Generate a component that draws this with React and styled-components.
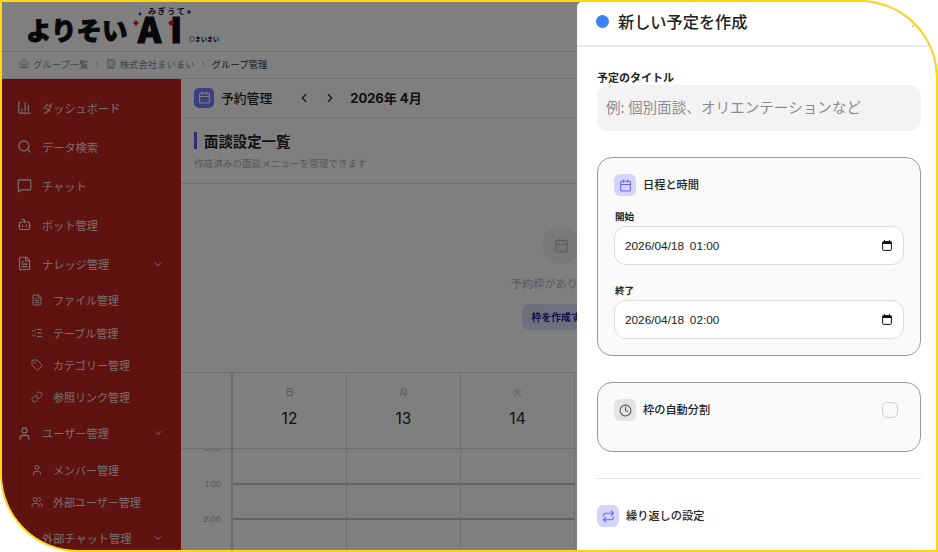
import styled, { createGlobalStyle } from 'styled-components';
import {
    Bot, Building, Calendar, CalendarDays, ChartColumn, ChevronDown, ChevronLeft, ChevronRight, Clock,
    FileText, House, Link, ListChecks, MessageSquare, Repeat, Search, Tag, User, Users,
} from 'lucide-react';

const GlobalStyle = createGlobalStyle`
html, body { margin: 0; padding: 0; background: #fff; }
body { font-family: "Noto Sans CJK JP", "Noto Sans", sans-serif; }
* { box-sizing: border-box; }
`;

const Frame = styled.div`
position: relative;
width: 938px;
height: 552px;
border: 2px solid #ffd60a;
border-radius: 0 78px 0 78px;
overflow: hidden;
background: #fff;
`;

const Page = styled.div`
display: flex;
flex-direction: column;
height: 100%;
isolation: isolate;
`;

const Header = styled.header`
height: 50px;
flex: none;
padding-left: 24px;
border-bottom: 1px solid #dcdcdc;
`;

const Breadcrumb = styled.nav`
height: 27px;
flex: none;
display: flex;
align-items: center;
gap: 4px;
padding: 0 0 2px 17px;
font-size: 9.4px;
color: #8a8a8a;
border-bottom: 1px solid #e4e4e4;
svg { flex: none; }
`;

const Crumb = styled.span`
color: ${(p) => (p.$current ? '#333' : '#8a8a8a')};
`;

const Body = styled.div`
flex: 1;
display: flex;
min-height: 0;
`;

const Sidebar = styled.aside`
width: 179px;
flex: none;
padding-top: 9px;
background: #bc2620;
border-right: 1px solid #d81c1c;
overflow: hidden;
`;

const NavRow = styled.div`
height: 39px;
display: flex;
align-items: center;
gap: 10px;
padding: 0 16px 0 ${(p) => (p.$noIcon ? 40 : 15)}px;
font-size: 11.2px;
color: #f0dcdc;
svg { color: #e8eef0; flex: none; }
`;

const Chevron = styled(ChevronDown)`
margin-left: auto;
`;

const SubGroup = styled.div`
margin-left: 17px;
padding: 1px 0 0 11px;
border-left: 1px solid #9e201a;
`;

const SubRow = styled.div`
height: 32.4px;
display: flex;
align-items: center;
gap: 10px;
font-size: 11px;
color: #f0dcdc;
svg { color: #e8eef0; flex: none; }
`;

const Main = styled.main`
flex: 1;
min-width: 0;
display: flex;
flex-direction: column;
overflow: hidden;
`;

const TopBar = styled.div`
height: 39px;
flex: none;
display: flex;
align-items: center;
padding: 0 0 1px 13px;
border-bottom: 1px solid #e0e0e0;
`;

const TopIcon = styled.div`
width: 20px;
height: 20px;
border-radius: 5px;
background: #767eff;
color: #fff;
display: flex;
align-items: center;
justify-content: center;
`;

const TopTitle = styled.h1`
margin: 0 25px 0 7px;
font-size: 12.8px;
font-weight: 500;
color: #222;
`;

const MonthNav = styled.div`
display: flex;
align-items: center;
gap: 12px;
color: #222;
`;

const MonthLabel = styled.div`
margin-left: 13px;
font-size: 13px;
font-weight: 700;
color: #222;
font-family: "Inter", "Noto Sans CJK JP", sans-serif;
`;

const Section = styled.div`
height: 66px;
flex: none;
padding: 14px 0 0 13px;
border-bottom: 1px solid #e0e0e0;
`;

const SectionTitle = styled.h2`
margin: 0;
padding-left: 7px;
font-size: 14.4px;
line-height: 17px;
font-weight: 700;
color: #222;
border-left: 3px solid #5a5fe0;
`;

const SectionSub = styled.p`
margin: 7px 0 0;
font-size: 9.6px;
line-height: 14px;
color: #b0b0b0;
`;

const Empty = styled.div`
height: 188px;
flex: none;
padding: 42px 0 0 5px;
display: flex;
flex-direction: column;
align-items: center;
`;

const EmptyCircle = styled.div`
width: 38px;
height: 38px;
border-radius: 50%;
background: #f3f3f3;
color: #bdbdbd;
display: flex;
align-items: center;
justify-content: center;
`;

const EmptyText = styled.p`
margin: 11px 0 0;
font-size: 11.2px;
line-height: 16px;
color: #b4b4b4;
`;

const EmptyButton = styled.div`
margin-top: 13px;
height: 26px;
padding: 0 10px;
display: flex;
align-items: center;
border-radius: 8px;
background: #dfe0fa;
color: #1c1c94;
font-size: 9.8px;
font-weight: 700;
`;

const DayHead = styled.div`
display: grid;
grid-template-columns: 52px repeat(3, 114px);
height: 77px;
flex: none;
position: relative;
z-index: 1;
background: #fff;
border-top: 1px solid #e0e0e0;
border-bottom: 1px solid #dcdcdc;
`;

const TimeHeadCell = styled.div`
border-right: 2px solid #d8d8d8;
`;

const DayCell = styled.div`
display: flex;
flex-direction: column;
align-items: center;
padding-top: 12px;
border-right: 1px solid #dedede;
`;

const DayName = styled.span`
font-size: 8.4px;
line-height: 12px;
color: #a0a0a0;
`;

const DayNum = styled.span`
margin-top: 11px;
font-size: 15.5px;
line-height: 22px;
color: #222;
font-family: "Inter", sans-serif;
`;

const TimeGrid = styled.div`
display: grid;
grid-template-columns: 52px repeat(3, 114px);
grid-auto-rows: 35.6px;
`;

const TimeCell = styled.div`
border-right: 2px solid #d8d8d8;
padding-right: 10px;
text-align: right;
font-family: "Inter", sans-serif;
font-size: 8.2px;
line-height: 10px;
color: #b4b4b4;
span { display: block; transform: translateY(-60%); }
`;

const SlotCell = styled.div`
border-right: 1px solid #dedede;
border-bottom: 2px solid #c4c4c4;
`;

const Overlay = styled.div`
position: absolute;
inset: 0;
background: rgba(0, 0, 0, 0.5);
`;

const Drawer = styled.section`
position: absolute;
top: 0;
right: 0;
bottom: 0;
width: 359px;
background: #fff;
border-radius: 5px 0 0 0;
overflow: hidden;
`;

const DrawerHead = styled.div`
height: 45px;
display: flex;
align-items: center;
gap: 9px;
padding: 0 19px 5px;
border-bottom: 2px solid #ebebeb;
svg { margin: 8px 0 0 auto; color: #9a9a9a; }
`;

const Dot = styled.span`
width: 13px;
height: 13px;
border-radius: 50%;
background: #3b82f6;
`;

const DrawerTitle = styled.h2`
margin: 0;
font-size: 16.2px;
font-weight: 500;
color: #222;
`;

const DrawerBody = styled.div`
padding: 23px 15px 0 20px;
`;

const FieldLabel = styled.label`
display: block;
font-size: ${(p) => p.$size || '11px'};
line-height: 14px;
font-weight: 700;
color: #222;
`;

const TitleInput = styled.div`
margin-top: 1px;
height: 46px;
padding: 0 0 3px 9px;
display: flex;
align-items: center;
border-radius: 12px;
background: #f3f3f4;
font-size: 14.6px;
color: #8c8c8c;
`;

const Card = styled.div`
margin-top: ${(p) => p.$top}px;
height: ${(p) => p.$height}px;
padding: 16px;
border: 1px solid #9a9a9a;
border-radius: 15px;
background: #fafafa;
`;

const CardHead = styled.div`
display: flex;
align-items: center;
gap: 7px;
font-size: 11.2px;
font-weight: 500;
color: #222;
`;

const HeadText = styled.span`
padding-bottom: 3px;
`;

const IconTile = styled.div`
width: 22px;
height: 22px;
flex: none;
border-radius: 6px;
display: flex;
align-items: center;
justify-content: center;
background: ${(p) => (p.$muted ? '#e4e4e4' : '#d4d4ff')};
color: ${(p) => (p.$muted ? '#555' : '#6366f1')};
`;

const TimeField = styled.div`
margin-top: ${(p) => p.$top}px;
padding-left: 1px;
`;

const DateBox = styled.div`
margin: 3px 0 0 -1px;
height: 39px;
padding: 0 11px 0 10px;
display: flex;
align-items: center;
justify-content: space-between;
border: 1px solid #dcdcdc;
border-radius: 12px;
background: #fff;
font-family: "Liberation Sans", sans-serif;
font-size: 11.8px;
word-spacing: 2.5px;
color: #222;
`;

const CheckBox = styled.div`
width: 16px;
height: 16px;
margin: 0 6px 0 auto;
border: 1.5px solid #cfcfcf;
border-radius: 5px;
`;

const Divider = styled.hr`
margin: 26px 0;
border: none;
border-top: 1px solid #e2e2e2;
`;

const NextCard = styled.div`
margin-top: 20px;
height: 40px;
border-radius: 15px;
background: #fafafa;
`;

const mainNav = [
    { Icon: ChartColumn, label: 'ダッシュボード' },
    { Icon: Search, label: 'データ検索' },
    { Icon: MessageSquare, label: 'チャット' },
    { Icon: Bot, label: 'ボット管理' },
];

const knowledge = [
    { Icon: FileText, label: 'ファイル管理' },
    { Icon: ListChecks, label: 'テーブル管理' },
    { Icon: Tag, label: 'カテゴリー管理' },
    { Icon: Link, label: '参照リンク管理' },
];

const users = [
    { Icon: User, label: 'メンバー管理' },
    { Icon: Users, label: '外部ユーザー管理' },
];

const days = [['日', 12], ['月', 13], ['火', 14]];

const LOGO_FONT = 'Noto Sans CJK JP';

const Logo = () => (
    <svg width="200" height="50" viewBox="0 0 200 50">
        <text x="0" y="38" fontSize="25.5" fontWeight="900" fill="#111" stroke="#111" strokeWidth="0.9" fontFamily={LOGO_FONT}>よりそい</text>
        <text x="112" y="41" fontSize="35" fontWeight="900" fill="#111" stroke="#111" strokeWidth="1.2" letterSpacing="9" fontFamily={LOGO_FONT}>AI</text>
        <text x="122" y="12" fontSize="8" fontWeight="700" fill="#111" letterSpacing="1.6" fontFamily={LOGO_FONT}>みぎうて</text>
        <text x="163" y="39" fontSize="6" fontWeight="700" fill="#111" fontFamily={LOGO_FONT}>◎まいまい</text>
        <path d="M107 21l3-3 3 3-3 3z M142 21l3-3 3 3-3 3z" fill="#e02020" />
        <circle cx="114" cy="12" r="1.5" fill="#2040c0" />
        <circle cx="163" cy="10" r="1.8" fill="#2040c0" />
    </svg>
);

const CalendarGlyph = () => (
    <svg width="10" height="11" viewBox="0 0 10 11">
        <path d="M2.5 0v2M7.5 0v2" stroke="#111" />
        <rect x="0.6" y="1.6" width="8.8" height="8.8" rx="1" fill="none" stroke="#111" />
        <rect x="0.6" y="1.6" width="8.8" height="2.4" fill="#111" />
    </svg>
);

const App = () => {
    const hours = ['0:00', '1:00', '2:00'];

    return (
        <>
            <GlobalStyle />
            <Frame>
                <Page>
                    <Header><Logo /></Header>
                    <Breadcrumb>
                        <House size={10} />
                        <Crumb>グループ一覧</Crumb>
                        <ChevronRight size={9} />
                        <Building size={10} />
                        <Crumb>株式会社まいまい</Crumb>
                        <ChevronRight size={9} />
                        <Crumb $current>グループ管理</Crumb>
                    </Breadcrumb>
                    <Body>
                        <Sidebar>
                            {mainNav.map(({ Icon, label }) => (
                                <NavRow key={label}><Icon size={15} strokeWidth={1.8} />{label}</NavRow>
                            ))}
                            <NavRow><FileText size={15} strokeWidth={1.8} />ナレッジ管理<Chevron size={12} /></NavRow>
                            <SubGroup>
                                {knowledge.map(({ Icon, label }) => (
                                    <SubRow key={label}><Icon size={12} strokeWidth={1.8} />{label}</SubRow>
                                ))}
                            </SubGroup>
                            <NavRow><User size={15} strokeWidth={1.8} />ユーザー管理<Chevron size={12} /></NavRow>
                            <SubGroup>
                                {users.map(({ Icon, label }) => (
                                    <SubRow key={label}><Icon size={12} strokeWidth={1.8} />{label}</SubRow>
                                ))}
                            </SubGroup>
                            <NavRow $noIcon>外部チャット管理<Chevron size={12} /></NavRow>
                        </Sidebar>
                        <Main>
                            <TopBar>
                                <TopIcon><Calendar size={13} /></TopIcon>
                                <TopTitle>予約管理</TopTitle>
                                <MonthNav>
                                    <ChevronLeft size={14} />
                                    <ChevronRight size={14} />
                                </MonthNav>
                                <MonthLabel>2026年 4月</MonthLabel>
                            </TopBar>
                            <Section>
                                <SectionTitle>面談設定一覧</SectionTitle>
                                <SectionSub>作成済みの面談メニューを管理できます</SectionSub>
                            </Section>
                            <Empty>
                                <EmptyCircle><CalendarDays size={15} /></EmptyCircle>
                                <EmptyText>予約枠がありません</EmptyText>
                                <EmptyButton>枠を作成する</EmptyButton>
                            </Empty>
                            <DayHead>
                                <TimeHeadCell />
                                {days.map(([name, num]) => (
                                    <DayCell key={name}>
                                        <DayName>{name}</DayName>
                                        <DayNum>{num}</DayNum>
                                    </DayCell>
                                ))}
                            </DayHead>
                            <TimeGrid>
                                {hours.flatMap((hour) => [
                                    <TimeCell key={hour}><span>{hour}</span></TimeCell>,
                                    ...days.map(([name]) => <SlotCell key={hour + name} />),
                                ])}
                            </TimeGrid>
                        </Main>
                    </Body>
                </Page>
                <Overlay />
                <Drawer>
                    <DrawerHead>
                        <Dot />
                        <DrawerTitle>新しい予定を作成</DrawerTitle>
                        <svg width="6" height="6" viewBox="0 0 6 6"><path d="M1 5L5 1" stroke="currentColor" fill="none" /></svg>
                    </DrawerHead>
                    <DrawerBody>
                        <FieldLabel>予定のタイトル</FieldLabel>
                        <TitleInput>例: 個別面談、オリエンテーションなど</TitleInput>
                        <Card $top={26} $height={199}>
                            <CardHead>
                                <IconTile><Calendar size={13} /></IconTile>
                                <HeadText>日程と時間</HeadText>
                            </CardHead>
                            <TimeField $top={13}>
                                <FieldLabel $size="9.6px">開始</FieldLabel>
                                <DateBox>2026/04/18 01:00<CalendarGlyph /></DateBox>
                            </TimeField>
                            <TimeField $top={18}>
                                <FieldLabel $size="9.6px">終了</FieldLabel>
                                <DateBox>2026/04/18 02:00<CalendarGlyph /></DateBox>
                            </TimeField>
                        </Card>
                        <Card $top={26} $height={70}>
                            <CardHead>
                                <IconTile $muted><Clock size={13} /></IconTile>
                                <HeadText>枠の自動分割</HeadText>
                                <CheckBox />
                            </CardHead>
                        </Card>
                        <Divider />
                        <CardHead>
                            <IconTile><Repeat size={13} /></IconTile>
                            <HeadText>繰り返しの設定</HeadText>
                        </CardHead>
                        <NextCard />
                    </DrawerBody>
                </Drawer>
            </Frame>
        </>
    );
};

export default App;
